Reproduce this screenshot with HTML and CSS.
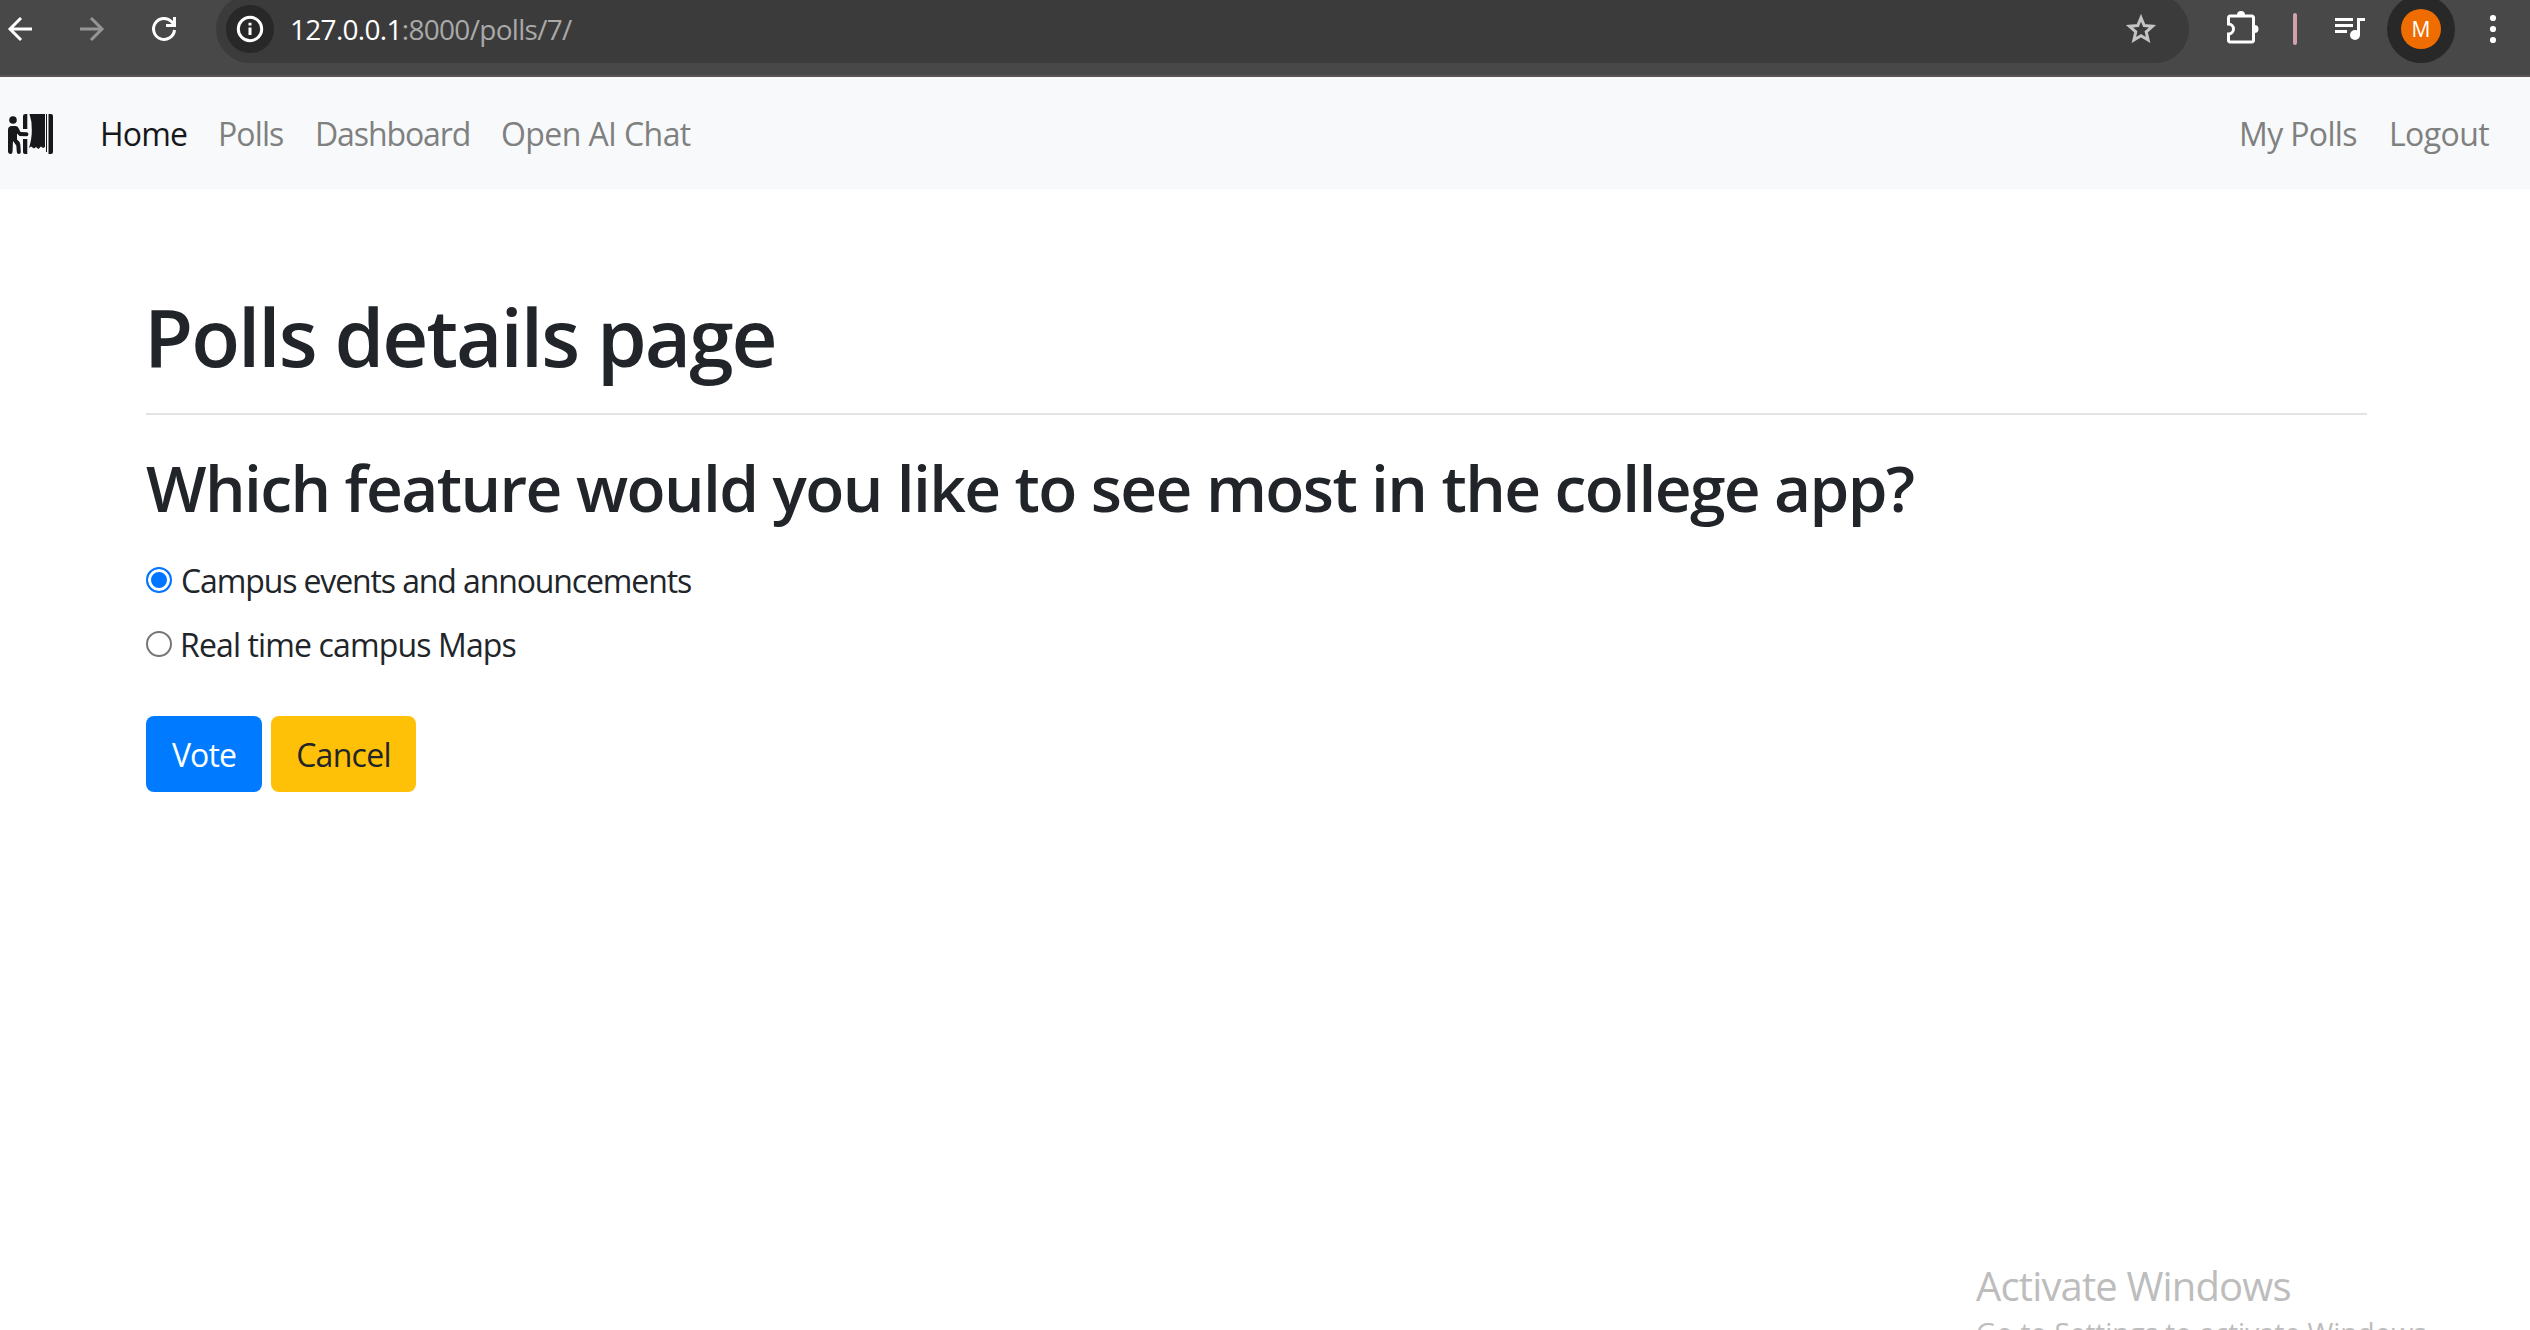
FILE: index.html
```html
<!DOCTYPE html>
<html lang="en">
<head>
  <meta charset="utf-8">
  <title>Polls details page</title>
  <link rel="stylesheet" href="styles.css">
</head>
<body>
  <div class="browser-bar">
    <svg class="icon back" width="24" height="24" viewBox="0 0 24 24"><path d="M24 12H2M13 1 2 12l11 11"/></svg>
    <svg class="icon forward" width="24" height="24" viewBox="0 0 24 24"><path d="M0 12h22M11 1l11 11-11 11"/></svg>
    <svg class="icon reload" width="24" height="24" viewBox="0 0 24 24"><path d="M22.5 13a10.5 10.5 0 1 1-2.8-8.2L22.5 8M22.5 0v8.5H14"/></svg>
    <div class="omnibox">
      <span class="site-info">
        <svg class="icon" width="28" height="28" viewBox="0 0 28 28"><circle cx="14" cy="14" r="11.7"/><path d="M14 12.5V20M14 7.7v2.8"/></svg>
      </span>
      <span class="url"><span class="host">127.0.0.1</span>:8000/polls/7/</span>
      <svg class="icon star" width="32" height="30" viewBox="0 0 32 30"><path d="M16 3.8 19.2 11.6 27.5 12.3 21.2 17.8 23.1 26 16 21.7 8.9 26 10.8 17.8 4.5 12.3 12.8 11.6Z"/></svg>
    </div>
    <svg class="icon puzzle" width="32" height="32" viewBox="0 0 32 32"><path d="M3 5h22a1.5 1.5 0 0 1 1.5 1.5v23A1.5 1.5 0 0 1 25 31H3a1.5 1.5 0 0 1-1.5-1.5V23a5 5 0 0 0 0-10V6.500A1.500 1.500 0 0 1 3 5Z"/><path class="solid" d="M10 4a4 4 0 0 1 8 0v1h-8ZM27.500 14a4 4 0 0 1 0 8h-1v-8Z"/></svg>
    <span class="divider"></span>
    <svg class="icon music" width="30" height="22" viewBox="0 0 30 22"><path d="M0 1.500h18M0 7.500h18M0 13.500h12M23.500 17V1.500H30"/><circle class="solid" cx="20" cy="17" r="5"/></svg>
    <span class="profile"><span class="avatar">M</span></span>
    <svg class="dots" width="8" height="30" viewBox="0 0 8 30"><circle cx="4" cy="4" r="3.100"/><circle cx="4" cy="15" r="3.100"/><circle cx="4" cy="26" r="3.100"/></svg>
  </div>

  <nav class="navbar">
    <svg class="logo" width="46" height="40" viewBox="0 0 46 40">
      <circle cx="5" cy="6" r="3.800"/>
      <path d="M4 12h3.500q2 0 3 2l2 4 6 .3a1.900 1.900 0 0 1 0 3.900l-7-.2-2.500-2.500v6q3 2 3.300 5l.5 7.500q0 2-2 2t-2-2l-.5-6.500L5 27l-.5 11q0 2-2 2T0 38V16q0-4 4-4Z"/>
      <path d="M15 15V2q0-2 2.500-2h1.800v15ZM15 25h4.300v15H17q-2 0-2-2ZM21.500 0H37v33l-2 1-2-1.500-2.500 2.500-2.500-2-2 1.500-3-2-2 1.500q3-10 2.800-18Q24 7 21.500 0ZM40.500 0H43q2 0 2 2v36q0 2-2 2h-2.500ZM38 0h1v38h-1Z"/>
    </svg>
    <a class="nav-link home active">Home</a>
    <a class="nav-link polls">Polls</a>
    <a class="nav-link dashboard">Dashboard</a>
    <a class="nav-link chat">Open AI Chat</a>
    <a class="nav-link my-polls">My Polls</a>
    <a class="nav-link logout">Logout</a>
  </nav>

  <main class="container">
    <h1 class="title">Polls details page</h1>
    <hr class="rule">
    <h2 class="question">Which feature would you like to see most in the college app?</h2>
    <form class="poll">
      <label class="choice events"><span class="radio checked"></span>Campus events and announcements</label>
      <label class="choice maps"><span class="radio"></span>Real time campus Maps</label>
      <div class="actions">
        <button type="button" class="btn vote">Vote</button>
        <button type="button" class="btn cancel">Cancel</button>
      </div>
    </form>
  </main>

  <aside class="watermark">
    <div class="watermark-title">Activate Windows</div>
    <div class="watermark-text">Go to Settings to activate Windows.</div>
  </aside>
</body>
</html>
```
FILE: styles.css
```css
* { box-sizing: border-box; }

body {
  margin: 0;
  height: 1330px;
  overflow: hidden;
  display: flex;
  flex-direction: column;
  position: relative;
  background: #fff;
  color: #212529;
  font: 32px/48px "Open Sans", "Noto Sans", sans-serif;
}

/* Browser toolbar */
.browser-bar {
  flex: none;
  display: flex;
  align-items: center;
  height: 77px;
  padding: 0 33px 17px 8px;
  overflow: hidden;
  background: #484848;
  border-bottom: 2px solid #595556;
}
.browser-bar > * { flex: none; }

.icon { fill: none; stroke: #fff; stroke-width: 3; overflow: visible; }
.icon .solid { fill: #fff; stroke: none; }
.forward { margin-left: 48px; stroke: #959595; }
.reload { margin-left: 48px; }

.omnibox {
  display: flex;
  align-items: center;
  width: 1973px;
  height: 68px;
  margin-left: 40px;
  padding: 0 32px 0 10px;
  border-radius: 34px;
  background: #3b3b3b;
}
.site-info {
  display: flex;
  align-items: center;
  justify-content: center;
  width: 48px;
  height: 48px;
  border-radius: 50%;
  background: #282828;
}
.url {
  margin: -1px 0 0 16px;
  color: #a9a9a9;
  font-size: 28px;
  letter-spacing: -.705px;
}
.host { color: #fff; }
.star { margin-left: auto; stroke: #c4c4c4; }

.puzzle { margin: -4px 0 0 38px; }
.divider {
  width: 4px;
  height: 32px;
  margin-left: 34px;
  border-radius: 2px;
  background: #d4a0ac;
}
.music { margin-left: 38px; }
.profile {
  display: flex;
  align-items: center;
  justify-content: center;
  width: 68px;
  height: 68px;
  margin-left: 22px;
  border-radius: 50%;
  background: #282828;
}
.avatar {
  width: 40px;
  height: 40px;
  border-radius: 50%;
  background: #ee6c00;
  color: #fff;
  font-size: 21px;
  line-height: 40px;
  text-align: center;
}
.dots { margin-left: 34px; fill: #fff; }

/* Site navigation */
.navbar {
  flex: none;
  display: flex;
  align-items: center;
  height: 112px;
  padding: 2px 0 0 8px;
  background: #f8f9fa;
}
.logo { margin-right: 46px; fill: #17181b; }
.nav-link { color: #7f8080; white-space: nowrap; }
.nav-link.active { color: #17181a; }
.home { width: 118px; letter-spacing: -.8px; }
.polls { width: 97px; letter-spacing: -.9px; }
.dashboard { width: 186px; letter-spacing: -1.1px; }
.chat { letter-spacing: -.6px; }
.my-polls { width: 150px; margin-left: auto; letter-spacing: -.65px; }
.logout { width: 141px; letter-spacing: -.6px; }

/* Poll */
.container { width: 2221px; margin: 99px 0 0 146px; }
.title, .question { margin: 0; font-weight: 600; }
.title { font-size: 80px; line-height: 96px; letter-spacing: -1.98px; margin-left: -2px; }
.rule { height: 2px; margin: 29px 0 34px; border: 0; background: #e4e4e4; }
.question { font-size: 64px; line-height: 77px; letter-spacing: -1.6px; }

.poll { margin-top: 31px; }
.choice { display: flex; align-items: center; height: 64px; padding-bottom: 16px; }
.events { letter-spacing: -1.12px; }
.maps { letter-spacing: -.87px; }
.radio {
  width: 26px;
  height: 26px;
  margin: 0 9px 2px 0;
  border: 2px solid #767676;
  border-radius: 50%;
}
.radio.checked {
  border-color: #0075ff;
  background: #0075ff;
  box-shadow: inset 0 0 0 3px #fff;
}
.maps .radio { margin-right: 8px; }

.actions { display: flex; gap: 9px; margin-top: 31px; }
.btn {
  height: 76px;
  padding: 1px 0 0;
  border: 0;
  border-radius: 8px;
  font: inherit;
  text-align: center;
}
.vote { width: 116px; background: #007bff; color: #fff; letter-spacing: -.9px; }
.cancel { width: 145px; background: #ffc107; color: #212529; letter-spacing: -.7px; }

/* Desktop watermark, drawn over the page */
.watermark {
  position: absolute;
  left: 1976px;
  top: 1259px;
  color: #bdbdbd;
  white-space: nowrap;
}
.watermark-title { font-size: 40px; line-height: 54px; letter-spacing: -.85px; }
.watermark-text { font-size: 28px; line-height: 38px; letter-spacing: -.03px; }
```
